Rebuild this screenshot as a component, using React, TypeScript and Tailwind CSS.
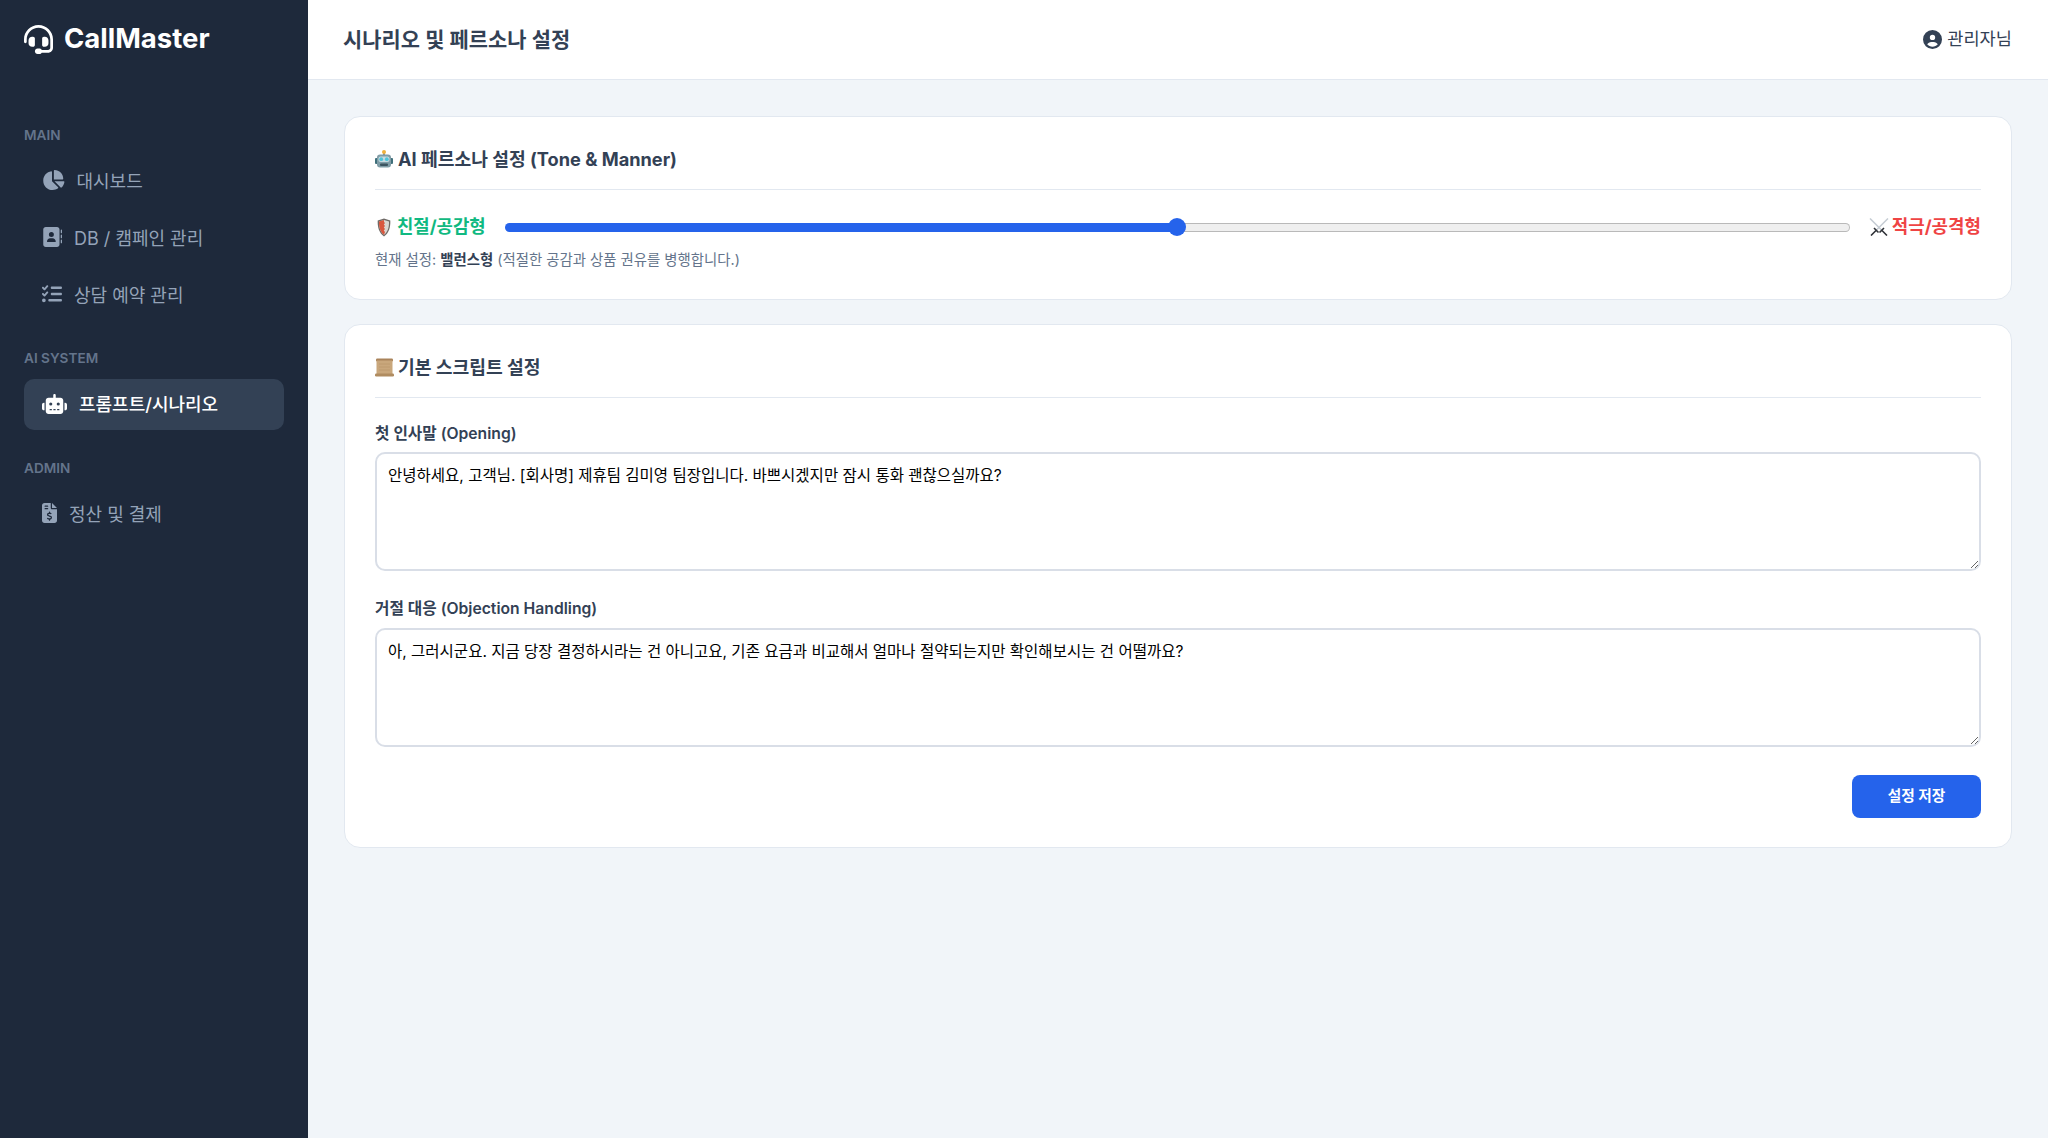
import { FaHeadset, FaChartPie, FaAddressBook, FaListCheck, FaRobot, FaFileInvoiceDollar, FaCircleUser } from "react-icons/fa6";
import type { ReactNode } from "react";

function Item({ icon, label, active }: { icon: ReactNode; label: string; active?: boolean }) {
  return (
    <div className={`h-[51px] rounded-[10px] flex items-center pl-[18px] gap-[12px] text-[18px] ${active ? "bg-[#334155] text-white font-medium" : "text-[#94a3b8]"}`}>
      {icon}
      <span>{label}</span>
    </div>
  );
}

function Section({ label }: { label: string }) {
  return <div className="text-[13.6px] leading-[17px] font-semibold text-[#64748b] uppercase">{label}</div>;
}

function RobotEmoji() {
  return (
    <svg viewBox="0 0 18 19" className="w-[18px] h-[19px] shrink-0">
      <rect x="8" y="2" width="2" height="3" fill="#8a8f94" />
      <circle cx="9" cy="2" r="2" fill="#f0b23c" />
      <rect x="0" y="8" width="2.5" height="6" rx="1" fill="#3f6f7a" />
      <rect x="15.5" y="8" width="2.5" height="6" rx="1" fill="#3f6f7a" />
      <rect x="2" y="4.5" width="14" height="13" rx="3" fill="#7f9ca6" />
      <rect x="3.5" y="6.5" width="11" height="5.5" rx="2" fill="#c7dbe0" />
      <circle cx="6.2" cy="9.2" r="1.9" fill="#4fc3d9" />
      <circle cx="11.8" cy="9.2" r="1.9" fill="#4fc3d9" />
      <rect x="5" y="13.5" width="8" height="2.5" rx="1" fill="#3c5560" />
    </svg>
  );
}

function ShieldEmoji() {
  return (
    <svg viewBox="0 0 14 19" className="w-[14px] h-[19px] shrink-0">
      <path d="M7 .5 L13.3 2.5 C13.6 9 12 15 7 18.5 C2 15 .4 9 .7 2.5 Z" fill="#6f6a66" />
      <path d="M7 2 L12 3.5 C12.2 9 10.8 14 7 16.8 C3.2 14 1.8 9 2 3.5 Z" fill="#d9d6d2" />
      <path d="M7 2 L2 3.5 C1.8 9 3.2 14 7 16.8 L8 14 L6.8 12.5 L8 11 L6.8 9.5 L8 8 L6.8 6.5 L8 5 L7 4 Z" fill="#d9573f" />
    </svg>
  );
}

function SwordsEmoji() {
  return (
    <svg viewBox="0 0 20 18" className="w-[20px] h-[18px] shrink-0">
      <path d="M1 .5 L13.5 13" stroke="#c5ccd3" strokeWidth="1.5" />
      <path d="M19 .5 L6.5 13" stroke="#c5ccd3" strokeWidth="1.5" />
      <path d="M10.5 14.5 L15 10 M13 12.5 L18 17.5" stroke="#2f3237" strokeWidth="1.6" />
      <path d="M9.5 14.5 L5 10 M7 12.5 L2 17.5" stroke="#2f3237" strokeWidth="1.6" />
    </svg>
  );
}

function ScrollEmoji() {
  return (
    <svg viewBox="0 0 19 19" className="w-[19px] h-[19px] shrink-0">
      <rect x="1" y="0.5" width="17" height="3" rx="1.2" fill="#a9835a" />
      <rect x="1.5" y="2.5" width="16" height="14" fill="#c9a77c" />
      <rect x="0" y="15.5" width="19" height="3" rx="1.2" fill="#b08c60" />
      <path d="M4 6h11M4 9h11M4 12h11" stroke="#bd9a6e" strokeWidth="1" />
    </svg>
  );
}

export default function App() {
  return (
    <div className="flex h-[1138px] w-[2048px] overflow-hidden bg-[#f1f5f9] font-['Inter','Noto_Sans_CJK_KR',sans-serif] text-[#1e293b]">
      <aside className="w-[308px] shrink-0 bg-[#1e293b] px-[24px]">
        <div className="h-[78px] flex items-center gap-[11px] text-white text-[27.5px] font-bold">
          <FaHeadset className="w-[29px] h-[29px]" />
          <span>CallMaster</span>
        </div>
        <div className="mt-[49px]"><Section label="MAIN" /></div>
        <div className="mt-[12px] flex flex-col gap-[6px]">
          <Item icon={<FaChartPie className="w-[22.5px] h-[20px] mb-[3px]" />} label="대시보드" />
          <Item icon={<FaAddressBook className="w-[20px] h-[20px] mb-[3px]" />} label="DB / 캠페인 관리" />
          <Item icon={<FaListCheck className="w-[20px] h-[20px] mb-[3px]" />} label="상담 예약 관리" />
        </div>
        <div className="mt-[29px]"><Section label="AI SYSTEM" /></div>
        <div className="mt-[12px]">
          <Item active icon={<FaRobot className="w-[25px] h-[20px] mb-[2px]" />} label="프롬프트/시나리오" />
        </div>
        <div className="mt-[30px]"><Section label="ADMIN" /></div>
        <div className="mt-[12px]">
          <Item icon={<FaFileInvoiceDollar className="w-[15px] h-[20px] mb-[3px]" />} label="정산 및 결제" />
        </div>
      </aside>
      <div className="flex-1 min-w-0 flex flex-col">
        <header className="h-[80px] bg-white border-b border-[#e2e8f0] flex items-center justify-between px-[36px]">
          <h1 className="-ml-[1px] text-[20.9px] font-semibold text-[#334155]">시나리오 및 페르소나 설정</h1>
          <div className="flex items-center gap-[5px] text-[17.6px] text-[#334155]">
            <FaCircleUser className="w-[19px] h-[19px]" />
            <span>관리자님</span>
          </div>
        </header>
        <main className="px-[36px] pt-[36px] flex flex-col gap-[24px]">
          <section className="h-[184px] bg-white border border-[#e2e8f0] rounded-[16px] px-[30px]">
            <h2 className="h-[73px] pt-[13px] border-b border-[#e2e8f0] flex items-center gap-[5px] text-[18.2px] font-bold text-[#334155]">
              <RobotEmoji /><span>AI 페르소나 설정 (Tone &amp; Manner)</span>
            </h2>
            <div className="mt-[21px] flex items-center gap-[19px] h-[32px]">
              <span className="flex items-center gap-[6px] text-[17.8px] font-bold text-[#10b981] whitespace-nowrap pl-[2px]">
                <ShieldEmoji />친절/공감형
              </span>
              <input
                type="range"
                defaultValue={50}
                className="flex-1 min-w-0 h-[9px] appearance-none rounded-full border border-transparent [background:linear-gradient(to_right,#2563eb_50%,transparent_50%)_border-box,linear-gradient(#efefef,#efefef)_padding-box,linear-gradient(#b9b9b9,#b9b9b9)_border-box] [&::-webkit-slider-thumb]:appearance-none [&::-webkit-slider-thumb]:w-[18px] [&::-webkit-slider-thumb]:h-[18px] [&::-webkit-slider-thumb]:rounded-full [&::-webkit-slider-thumb]:bg-[#2563eb]"
              />
              <span className="flex items-center gap-[3px] text-[17.9px] font-bold text-[#ef4444] whitespace-nowrap">
                <SwordsEmoji />적극/공격형
              </span>
            </div>
            <p className="mt-[7px] text-[14.4px] leading-[20px] text-[#64748b]">현재 설정: <b className="text-[#334155]">밸런스형</b> (적절한 공감과 상품 권유를 병행합니다.)</p>
          </section>
          <section className="h-[524px] bg-white border border-[#e2e8f0] rounded-[16px] px-[30px]">
            <h2 className="h-[73px] pt-[13px] border-b border-[#e2e8f0] flex items-center gap-[4px] text-[18.2px] font-bold text-[#334155]">
              <ScrollEmoji /><span>기본 스크립트 설정</span>
            </h2>
            <label className="block mt-[26px] text-[15.7px] font-semibold text-[#334155] leading-[20px]">첫 인사말 (Opening)</label>
            <textarea
              className="block mt-[8px] w-full h-[119px] border-2 border-[#d9dee7] rounded-[10px] px-[11px] py-[10px] text-[15.5px] text-black outline-none"
              defaultValue="안녕하세요, 고객님. [회사명] 제휴팀 김미영 팀장입니다. 바쁘시겠지만 잠시 통화 괜찮으실까요?"
            />
            <label className="block mt-[28px] text-[15.7px] font-semibold text-[#334155] leading-[20px]">거절 대응 (Objection Handling)</label>
            <textarea
              className="block mt-[9px] w-full h-[119px] border-2 border-[#d9dee7] rounded-[10px] px-[11px] py-[10px] text-[15.5px] text-black outline-none"
              defaultValue="아, 그러시군요. 지금 당장 결정하시라는 건 아니고요, 기존 요금과 비교해서 얼마나 절약되는지만 확인해보시는 건 어떨까요?"
            />
            <div className="mt-[28px] flex justify-end">
              <button className="w-[129px] h-[43px] bg-[#2563eb] rounded-[8px] text-white text-[14.7px] font-bold">설정 저장</button>
            </div>
          </section>
        </main>
      </div>
    </div>
  );
}
